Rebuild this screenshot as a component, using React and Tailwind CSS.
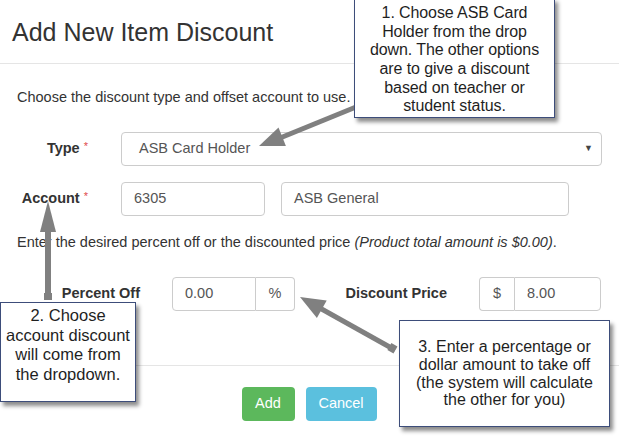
import React from "react";

const inputBox =
  "h-[34px] border border-[#cccccc] bg-white text-[14.5px] text-[#555555] flex items-center";

const Callout = ({ className, children }) => (
  <div
    className={
      "absolute bg-white border-[1.5px] border-[#3d4d7a] shadow-[3px_4px_4px_rgba(0,0,0,0.45)] text-[#1f1f1f] text-center flex flex-col " +
      className
    }
  >
    {children}
  </div>
);

const Arrows = () => (
  <svg
    className="absolute inset-0 pointer-events-none"
    width="619"
    height="437"
    viewBox="0 0 619 437"
  >
    {/* arrow 1 */}
    <line x1="356" y1="107" x2="280" y2="138" stroke="#808080" strokeWidth="5" />
    <polygon points="259,146 278.5,127.4 285.9,146" fill="#808080" />
    {/* arrow 2 */}
    <line x1="48" y1="228" x2="48" y2="298" stroke="#808080" strokeWidth="6" />
    <polygon points="48,201 40,232 56,232" fill="#808080" />
    <rect x="44" y="293" width="8" height="7" fill="#808080" />
    {/* arrow 3 */}
    <line x1="318" y1="307" x2="395" y2="350" stroke="#808080" strokeWidth="5" />
    <polygon points="300,297 316.9,318 326.7,300.6" fill="#808080" />
    <rect x="389" y="344" width="7" height="8" fill="#808080" transform="rotate(30 392 348)" />
  </svg>
);

export default function App() {
  return (
    <div className="relative w-[619px] h-[437px] overflow-hidden bg-white font-['Liberation_Sans',Arial,sans-serif] text-[#333333]">
      {/* Header */}
      <div className="h-[64px] border-b border-[#e5e5e5] flex items-center px-[12px] pt-[3px]">
        <h4 className="text-[25px] font-normal text-[#333333]">Add New Item Discount</h4>
      </div>

      {/* Body */}
      <div className="px-[17px] pt-[23px] pb-[54px]">
        <p className="text-[14.5px] leading-[20px]">
          Choose the discount type and offset account to use.
        </p>

        <div className="flex items-center mt-[25px]">
          <label className="w-[71px] text-right text-[14.5px] font-bold">
            Type <span className="text-[#e04a4a] font-normal text-[11px] align-top">*</span>
          </label>
          <div className={inputBox + " ml-[33px] flex-1 rounded-[4px] pl-[17px] pr-[8px] justify-between"}>
            <span>ASB Card Holder</span>
            <span className="text-[9px] text-[#444444]">▼</span>
          </div>
        </div>

        <div className="flex items-center mt-[16px]">
          <label className="w-[71px] text-right text-[14.5px] font-bold">
            Account <span className="text-[#e04a4a] font-normal text-[11px] align-top">*</span>
          </label>
          <div className={inputBox + " ml-[33px] w-[144px] rounded-[4px] px-[12px]"}>6305</div>
          <div className={inputBox + " ml-[16px] w-[288px] rounded-[4px] px-[12px]"}>ASB General</div>
        </div>

        <p className="text-[14.5px] leading-[20px] mt-[16px]">
          Enter the desired percent off or the discounted price{" "}
          <i>(Product total amount is $0.00)</i>.
        </p>

        <div className="flex items-center mt-[25px]">
          <label className="w-[123px] text-right text-[14.5px] font-bold">Percent Off</label>
          <div className="ml-[32px] w-[123px] flex">
            <div className={inputBox + " flex-1 rounded-l-[4px] px-[12px]"}>0.00</div>
            <div className={inputBox + " w-[39px] justify-center rounded-r-[4px] border-l-0 bg-[#eeeeee]"}>%</div>
          </div>
          <label className="w-[152px] text-right text-[14.5px] font-bold">Discount Price</label>
          <div className="ml-[32px] w-[122px] flex">
            <div className={inputBox + " w-[35px] justify-center rounded-l-[4px] border-r-0 bg-[#eeeeee]"}>$</div>
            <div className={inputBox + " flex-1 rounded-r-[4px] px-[12px]"}>8.00</div>
          </div>
        </div>
      </div>

      {/* Footer */}
      <div className="border-t border-[#e5e5e5] pt-[21px] flex justify-center gap-[11px] pr-[1px]">
        <button className="h-[34px] w-[53px] rounded-[4px] bg-[#5cb85c] text-white text-[14.5px]">Add</button>
        <button className="h-[34px] w-[71px] rounded-[4px] bg-[#5bc0de] text-white text-[14.5px]">Cancel</button>
      </div>

      <Arrows />

      <Callout className="left-[354px] top-[-2px] w-[201px] h-[120px] justify-center pt-[4px] text-[16px] leading-[18.7px] tracking-[-0.1px]">
        <span>1. Choose ASB Card</span>
        <span>Holder from the drop</span>
        <span>down. The other options</span>
        <span>are to give a discount</span>
        <span>based on teacher or</span>
        <span>student status.</span>
      </Callout>

      <Callout className="left-0 top-[302px] w-[136px] h-[100px] pt-[3px] text-[16.5px] leading-[19.5px]">
        <span>2. Choose</span>
        <span>account discount</span>
        <span>will come from</span>
        <span>the dropdown.</span>
      </Callout>

      <Callout className="left-[399px] top-[320px] w-[211px] h-[107px] justify-center text-[16px] leading-[17.8px]">
        <span>3. Enter a percentage or</span>
        <span>dollar amount to take off</span>
        <span>(the system will calculate</span>
        <span>the other for you)</span>
      </Callout>
    </div>
  );
}
